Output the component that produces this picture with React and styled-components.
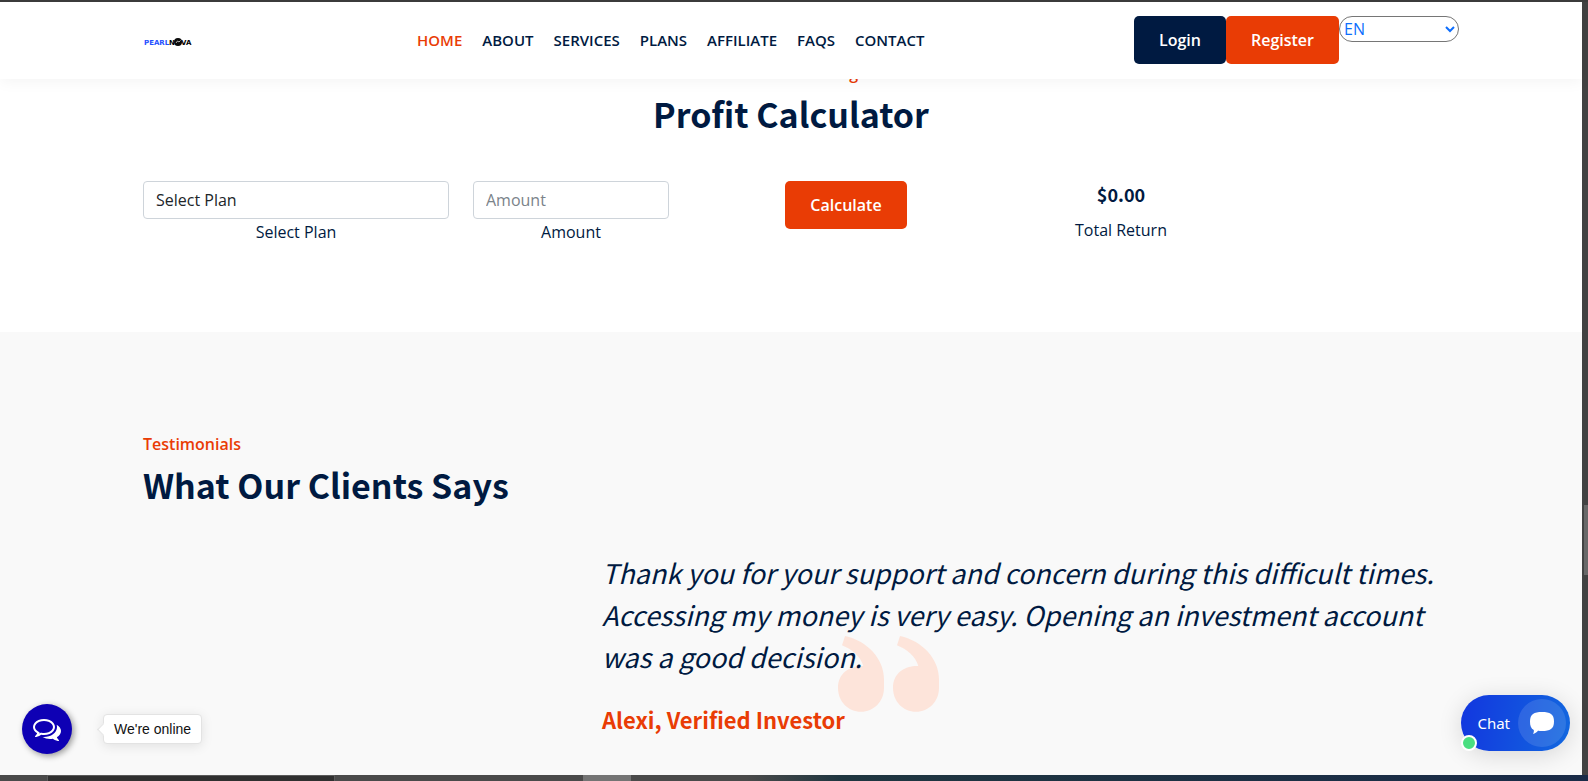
import { useState } from "react";
import styled, { createGlobalStyle } from "styled-components";

const navy = '#001a41'
const orange = '#e93c05'
const heading = '"Noto Sans CJK SC", "Open Sans", sans-serif'

// Styled & Styles
const GlobalStyle = createGlobalStyle`
*{ box-sizing:border-box; }
body{
margin:0;
font-family:"Open Sans", sans-serif;
font-size:16px;
line-height:24px;
color:${navy};
background:#fff;
}
`
const Screen = styled.div`
min-height:100vh;
display:flex;
flex-direction:column;
border-top:2px solid #3c3c3c;
`
const Viewport = styled.div`
flex:1;
display:flex;
`
const Page = styled.div`
flex:1;
display:flex;
flex-direction:column;
position:relative;
`
const ScrollTrack = styled.div`
width:6px;
background:#424242;
display:flex;
flex-direction:column;
align-items:flex-end;
`
const ScrollThumb = styled.div`
width:4px;
height:9%;
margin-top:503px;
background:#686868;
`
const TaskBar = styled.div`
height:6px;
display:flex;
background:linear-gradient(90deg, #4a4a4a 0%, #4a4a4a 47%, #1f3640 53%, #1a2b48 100%);
`
const TaskItem = styled.div`
width:${p => p.$wide ? '288px' : '48px'};
margin-left:${p => p.$wide ? '47px' : '248px'};
background:${p => p.$wide ? '#303030' : '#747474'};
border:${p => p.$wide ? '1px solid #5a5a5a' : 'none'};
border-bottom:none;
`
const Container = styled.div`
width:100%;
max-width:1320px;
margin:0 auto;
padding:0 12px;
`
const Header = styled.header`
position:absolute;
top:0;
left:0;
right:0;
z-index:2;
padding:14px 0 15px;
background:#fff;
box-shadow:0 2px 15px rgba(0,0,0,0.05);
`
const NavBar = styled(Container)`
display:flex;
align-items:flex-start;
`
const Logo = styled.a`
width:50px;
height:48px;
padding-top:4px;
display:flex;
align-items:center;
`
const Menu = styled.nav`
margin-left:224px;
height:48px;
display:flex;
align-items:center;
gap:20px;
`
const MenuLink = styled.a`
font-size:15px;
font-weight:600;
text-decoration:none;
color:${p => p.$active ? orange : navy};
`
const Actions = styled.div`
display:flex;
align-items:flex-start;
margin-left:auto;
margin-right:-20px;
`
const Button = styled.button`
height:48px;
padding:0 25px;
border:none;
border-radius:5px;
font:600 16px/24px "Open Sans", sans-serif;
color:#fff;
background:${p => p.$dark ? navy : orange};
`
const LangSelect = styled.select`
width:120px;
height:26px;
border:1px solid #767676;
border-radius:14px;
background:#fff;
color:#0d6efd;
font:400 16px/24px "Open Sans", sans-serif;
`
const Calculator = styled.section`
padding:59px 0 88px;
`
const SubTitle = styled.p`
margin:0;
font-weight:600;
color:${orange};
text-align:${p => p.$center ? 'center' : 'left'};
`
const Title = styled.h2`
margin:6px 0 0;
font:700 34px/46px ${heading};
text-align:${p => p.$center ? 'center' : 'left'};
`
const CalcRow = styled.div`
display:grid;
grid-template-columns:3fr 2fr 3fr 2fr 2fr;
margin:44px -12px 0;
text-align:center;
`
const Cell = styled.div`
padding:0 12px;
display:flex;
flex-direction:column;
align-items:center;
`
const Field = styled.input`
width:100%;
height:38px;
margin-bottom:1px;
padding:6px 12px;
appearance:none;
border:1px solid #ced4da;
border-radius:4px;
background:#fff;
color:#212529;
font:400 16px/24px "Open Sans", sans-serif;
&::placeholder{ color:#7b838a; }
`
const Result = styled.output`
margin:1px 0 12px;
font:700 18px/24px ${heading};
`
const Testimonials = styled.section`
flex:1;
padding:100px 0 32px;
background:#f9f9f9;
`
const Quote = styled.blockquote`
position:relative;
margin:44px 0 0 459px;
font-family:${heading};
`
const QuoteMark = styled.svg`
position:absolute;
left:236px;
top:84px;
width:101px;
height:76px;
`
const QuoteText = styled.p`
position:relative;
margin:0;
font-size:27px;
line-height:42px;
font-style:italic;
`
const Author = styled.footer`
position:relative;
margin-top:25px;
font-size:22px;
line-height:32px;
font-weight:700;
color:${orange};
`
const Bubble = styled.button`
position:absolute;
left:22px;
bottom:21px;
width:50px;
height:50px;
padding:0;
border:none;
border-radius:50%;
display:flex;
align-items:center;
justify-content:center;
background:#0e00b4;
box-shadow:2px 2px 6px rgba(0,0,0,0.4);
`
const OnlineTip = styled.div`
position:absolute;
left:103px;
bottom:31px;
padding:4px 10px;
border:1px solid #e3e3e3;
border-radius:4px;
background:#fff;
color:#111;
font:400 14px/20px "Liberation Sans", sans-serif;
box-shadow:0 2px 12px rgba(0,0,0,0.1);
&::before{
content:"";
position:absolute;
left:-5px;
top:10px;
width:8px;
height:8px;
background:#fff;
border:1px solid #e3e3e3;
border-width:0 0 1px 1px;
transform:rotate(45deg);
}
`
const ChatButton = styled.button`
position:absolute;
right:12px;
bottom:24px;
height:56px;
padding:0 4px 0 16px;
border:none;
border-radius:28px;
display:flex;
align-items:center;
gap:8px;
color:#fff;
font:400 15px/20px "Noto Sans", sans-serif;
background:linear-gradient(100deg, #1236df, #1268df);
box-shadow:0 4px 24px rgba(0,0,0,0.14);
`
const ChatIcon = styled.span`
width:48px;
height:48px;
border-radius:50%;
display:flex;
align-items:center;
justify-content:center;
background:rgba(255,255,255,0.12);
`
const Dot = styled.span`
position:absolute;
left:0;
bottom:0;
width:16px;
height:16px;
border:2px solid #fff;
border-radius:50%;
background:#4ade80;
`

const menu = ['HOME', 'ABOUT', 'SERVICES', 'PLANS', 'AFFILIATE', 'FAQS', 'CONTACT']

const LogoMark = () => <svg width="50" height="10" viewBox="0 0 50 10" role="img" aria-label="PearlNova">
    <g fontFamily="DejaVu Sans, sans-serif" fontWeight="700" fontSize="7">
        <text x="1" y="8" fill="#1f4fff">PEARL</text>
        <text x="26" y="8" fill="#000">N</text>
        <text x="38" y="8" fill="#000">VA</text>
    </g>
    <circle cx="35" cy="5" r="4" fill="#0a0a0a" />
    <path d="M33 6l1.500-2 1.500 1 1.500-1.500" fill="none" stroke="#ddd" strokeWidth="0.8" />
</svg>

const CommentsIcon = () => <svg width="28" height="28" viewBox="0 0 1792 1792" fill="#fff">
    <path d="M704 384q-153 0-286 52t-211.500 141-78.500 191q0 82 53 158t149 132l97 56-35 84q34-20 62-39l44-31 53 10q78 14 153 14 153 0 286-52t211.500-141 78.500-191-78.500-191-211.500-141-286-52zm0-128q191 0 353.500 68.500t256.500 186.500 94 257-94 257-256.500 186.500-353.500 68.500q-86 0-176-16-124 88-278 128-36 9-86 16h-3q-11 0-20.500-8t-11.500-21q-1-3-1-6.500t.5-6.500 2-6l2.500-5 3.500-5.500 4-5 4.500-5 4-4.500q5-6 23-25t26-29.500 22.500-29 25-38.500 20.500-44q-124-72-195-177t-71-224q0-139 94-257t256.500-186.500 353.500-68.500zm822 1169q10 24 20.500 44t25 38.500 22.500 29 26 29.500 23 25q1 1 4 4.500t4.500 5 4 5 3.500 5.500l2.500 5 2 6 .5 6.500-1 6.500q-3 14-13 22t-22 7q-50-7-86-16-154-40-278-128-90 16-176 16-271 0-472-132 58 4 88 4 161 0 309-45t264-129q125-92 192-212t67-254q0-77-23-152 129 71 204 178t75 230q0 120-71 224.500t-195 176.500z" />
</svg>

const App = () => {
    const [lang, setLang] = useState('EN')
    const [amount, setAmount] = useState('')

    return <Screen>
        <GlobalStyle />
        <Viewport>
            <Page>
                <Header>
                    <NavBar>
                        <Logo href="#"><LogoMark /></Logo>
                        <Menu>
                            {menu.map(item => <MenuLink key={item} href="#" $active={item === 'HOME'}>{item}</MenuLink>)}
                        </Menu>
                        <Actions>
                            <Button $dark>Login</Button>
                            <Button>Register</Button>
                            <LangSelect aria-label="Language" value={lang} onChange={(e) => setLang(e.target.value)}>
                                <option>EN</option>
                            </LangSelect>
                        </Actions>
                    </NavBar>
                </Header>
                <Calculator>
                    <Container>
                        <SubTitle $center>Calculate Earning</SubTitle>
                        <Title $center>Profit Calculator</Title>
                        <CalcRow>
                            <Cell>
                                <Field as="select" id="plan"><option>Select Plan</option></Field>
                                <label htmlFor="plan">Select Plan</label>
                            </Cell>
                            <Cell>
                                <Field id="amount" placeholder="Amount" value={amount} onChange={(e) => setAmount(e.target.value)} />
                                <label htmlFor="amount">Amount</label>
                            </Cell>
                            <Cell><Button>Calculate</Button></Cell>
                            <Cell>
                                <Result id="total">$0.00</Result>
                                <label htmlFor="total">Total Return</label>
                            </Cell>
                        </CalcRow>
                    </Container>
                </Calculator>
                <Testimonials>
                    <Container>
                        <SubTitle>Testimonials</SubTitle>
                        <Title>What Our Clients Says</Title>
                        <Quote>
                            <QuoteMark viewBox="0 0 303 228" fill="#fde4da">
                                <path id="mark" d="M21 0C90 15 138 70 138 130V155C138 197 107 227 69 227C31 227 0 197 0 155C0 118 28 88 76 90C68 62 42 40 12 28Z" />
                                <use href="#mark" x="165" />
                            </QuoteMark>
                            <QuoteText>Thank you for your support and concern during this difficult times. Accessing my money is very easy. Opening an investment account was a good decision.</QuoteText>
                            <Author>Alexi, Verified Investor</Author>
                        </Quote>
                    </Container>
                </Testimonials>
                <Bubble aria-label="Open chat"><CommentsIcon /></Bubble>
                <OnlineTip>We're online</OnlineTip>
                <ChatButton>
                    Chat
                    <ChatIcon>
                        <svg width="24" height="22" viewBox="0 0 24 22" fill="#fff">
                            <path d="M12 0C20 0 24 2 24 9.500C24 17 20 19 12 19C10 19 9 19 8 18.800C6.500 20.500 5 21.500 3 22C3.800 20.500 4 19.300 3.800 18C1 16.500 0 13.800 0 9.500C0 2 4 0 12 0Z" />
                        </svg>
                    </ChatIcon>
                    <Dot />
                </ChatButton>
            </Page>
            <ScrollTrack><ScrollThumb /></ScrollTrack>
        </Viewport>
        <TaskBar>
            <TaskItem $wide />
            <TaskItem />
        </TaskBar>
    </Screen>
}

export default App
